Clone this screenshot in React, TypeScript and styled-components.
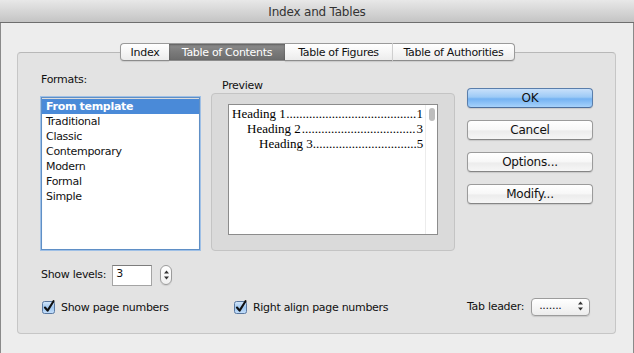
import styled, { createGlobalStyle } from 'styled-components';

const GlobalStyle = createGlobalStyle`
  html, body {
    margin: 0;
    padding: 0;
    background: #ededed;
  }
  * {
    box-sizing: border-box;
  }
`;

const FORMATS = [
  'From template',
  'Traditional',
  'Classic',
  'Contemporary',
  'Modern',
  'Formal',
  'Simple',
];

const TABS = [
  { label: 'Index', width: 49 },
  { label: 'Table of Contents', width: 116 },
  { label: 'Table of Figures', width: 107 },
  { label: 'Table of Authorities', width: 123 },
];

const HEADINGS = [
  { text: 'Heading 1', page: '1', indent: 0, dots: 40 },
  { text: 'Heading 2', page: '3', indent: 15, dots: 35 },
  { text: 'Heading 3', page: '5', indent: 27, dots: 32 },
];

const CheckIcon = () => (
  <svg width="14" height="14" viewBox="0 0 14 14">
    <defs>
      <linearGradient id="cbFill" x1="0" y1="0" x2="0" y2="1">
        <stop offset="0" stopColor="#d6e8fb" />
        <stop offset="0.5" stopColor="#9fc7f0" />
        <stop offset="1" stopColor="#c4defa" />
      </linearGradient>
    </defs>
    <rect
      x="0.5"
      y="1.5"
      width="12"
      height="12"
      rx="2"
      fill="url(#cbFill)"
      stroke="#5a78a0"
    />
    <path
      d="M3 7.5 L5.6 10.6 L11.5 1.2"
      fill="none"
      stroke="#111"
      strokeWidth="2.1"
      strokeLinecap="round"
      strokeLinejoin="round"
    />
  </svg>
);

const Arrows = ({ h }: { h: number }) => (
  <svg width="5" height={h} viewBox={`0 0 5 ${h}`}>
    <path d={`M0 ${h / 2 - 1.5} L2.5 ${h / 2 - 4.5} L5 ${h / 2 - 1.5} Z`} fill="#333" />
    <path d={`M0 ${h / 2 + 1.5} L2.5 ${h / 2 + 4.5} L5 ${h / 2 + 1.5} Z`} fill="#333" />
  </svg>
);

const App = () => {
  return (
    <Window>
      <GlobalStyle />
      <TitleBar>Index and Tables</TitleBar>
      <Body>
        <TabStrip>
          {TABS.map((t, i) => (
            <Tab
              key={t.label}
              $w={t.width}
              $active={i === 1}
              $first={i === 0}
              $last={i === TABS.length - 1}
              $sep={i === 3}
            >
              {t.label}
            </Tab>
          ))}
        </TabStrip>

        <GroupBox>
          <TopRow>
            <FormatsColumn>
              <Label>Formats:</Label>
              <ListBox>
                {FORMATS.map((f, i) => (
                  <ListItem key={f} $selected={i === 0}>
                    {f}
                  </ListItem>
                ))}
              </ListBox>
            </FormatsColumn>

            <PreviewColumn>
              <PreviewLabel>Preview</PreviewLabel>
              <Well>
                <PreviewBox>
                  <PreviewLines>
                    {HEADINGS.map((h) => (
                      <TocLine key={h.text} $indent={h.indent}>
                        <span>{h.text}</span>
                        <Leader>{'.'.repeat(h.dots)}</Leader>
                        <span>{h.page}</span>
                      </TocLine>
                    ))}
                  </PreviewLines>
                  <ScrollTrack>
                    <ScrollThumb />
                  </ScrollTrack>
                </PreviewBox>
              </Well>
            </PreviewColumn>

            <ButtonColumn>
              <PushButton $primary>OK</PushButton>
              <PushButton>Cancel</PushButton>
              <PushButton>Options...</PushButton>
              <PushButton>Modify...</PushButton>
            </ButtonColumn>
          </TopRow>

          <LevelsRow>
            <Label>Show levels:</Label>
            <NumberField>3</NumberField>
            <Stepper>
              <Arrows h={18} />
            </Stepper>
          </LevelsRow>

          <CheckRow>
            <CheckItem>
              <CheckIcon />
              <span>Show page numbers</span>
            </CheckItem>
            <CheckItem>
              <CheckIcon />
              <span>Right align page numbers</span>
            </CheckItem>
            <LeaderPicker>
              <Label>Tab leader:</Label>
              <PopUp>
                <span>.......</span>
                <Arrows h={16} />
              </PopUp>
            </LeaderPicker>
          </CheckRow>
        </GroupBox>
      </Body>
    </Window>
  );
};

const Window = styled.div`
  width: 634px;
  height: 353px;
  display: flex;
  flex-direction: column;
  background: #ededed;
  font-family: 'DejaVu Sans', 'Liberation Sans', sans-serif;
  font-size: 11px;
  letter-spacing: -0.3px;
  color: #111;
  overflow: hidden;
`;

const TitleBar = styled.div`
  height: 23px;
  flex: 0 0 23px;
  display: flex;
  align-items: center;
  justify-content: center;
  background: linear-gradient(#e8e8e8, #d6d6d6 50%, #c4c4c4);
  border-bottom: 1px solid #6e6e6e;
  font-size: 12px;
  letter-spacing: -0.2px;
  color: #333;
  padding-top: 1px;
`;

const Body = styled.div`
  flex: 1;
  padding: 20px 17px 0 16px;
  border-left: 1px solid #8a8a8a;
  border-right: 1px solid #8a8a8a;
`;

const TabStrip = styled.div`
  position: relative;
  z-index: 1;
  display: flex;
  justify-content: center;
  height: 18px;
  padding-left: 2px;
`;

const Tab = styled.div<{
  $w: number;
  $active?: boolean;
  $first?: boolean;
  $last?: boolean;
  $sep?: boolean;
}>`
  width: ${(p) => p.$w}px;
  height: 18px;
  display: flex;
  align-items: center;
  justify-content: center;
  border-top: 1px solid #9a9a9a;
  border-bottom: 1px solid #8c8c8c;
  border-left: ${(p) =>
    p.$first ? '1px solid #9a9a9a' : p.$sep ? '1px solid #cfcfcf' : 'none'};
  border-right: ${(p) => (p.$last ? '1px solid #9a9a9a' : 'none')};
  border-radius: ${(p) =>
    p.$first ? '4px 0 0 4px' : p.$last ? '0 4px 4px 0' : '0'};
  background: ${(p) =>
    p.$active
      ? 'linear-gradient(#8e8e8e, #7a7a7a 50%, #6c6c6c)'
      : 'linear-gradient(#ffffff, #f6f6f6 50%, #ececec)'};
  color: ${(p) => (p.$active ? '#fff' : '#111')};
  box-shadow: ${(p) =>
    p.$active ? 'inset 0 1px 2px rgba(0,0,0,0.35)' : '0 1px 1px rgba(0,0,0,0.1)'};
  white-space: nowrap;
`;

const GroupBox = styled.div`
  margin-top: -9px;
  height: 282px;
  background: #e3e3e3;
  border: 1px solid #c6c6c6;
  border-top-color: #b8b8b8;
  border-radius: 4px;
  padding: 0 22px 15px 23px;
  display: flex;
  flex-direction: column;
`;

const TopRow = styled.div`
  display: flex;
  align-items: flex-start;
`;

const Label = styled.div`
  line-height: 14px;
  white-space: nowrap;
`;

const FormatsColumn = styled.div`
  width: 159px;
  flex: 0 0 159px;
  padding-top: 20px;
  display: flex;
  flex-direction: column;
  gap: 10px;
`;

const ListBox = styled.div`
  height: 153px;
  background: #fff;
  border: 1px solid #5f8fc6;
  box-shadow: 0 0 0 1px #9fc0e6, inset 0 1px 1px rgba(0,0,0,0.15);
  padding-top: 1px;
`;

const ListItem = styled.div<{ $selected?: boolean }>`
  height: 15px;
  line-height: 15px;
  padding-left: 4px;
  background: ${(p) => (p.$selected ? '#4a8ad8' : 'transparent')};
  color: ${(p) => (p.$selected ? '#fff' : '#111')};
  font-weight: ${(p) => (p.$selected ? 'bold' : 'normal')};
`;

const PreviewColumn = styled.div`
  width: 244px;
  flex: 0 0 244px;
  margin-left: 11px;
  padding-top: 26px;
  display: flex;
  flex-direction: column;
  min-width: 0;
`;

const PreviewLabel = styled(Label)`
  padding-left: 11px;
`;

const Well = styled.div`
  height: 158px;
  background: #dadada;
  border: 1px solid #c4c4c4;
  border-radius: 4px;
  padding: 10px 16px 15px 16px;
  display: flex;
  min-width: 0;
`;

const PreviewBox = styled.div`
  flex: 1;
  min-width: 0;
  display: flex;
  background: #fff;
  border: 1px solid #8c8c8c;
`;

const PreviewLines = styled.div`
  flex: 1;
  min-width: 0;
  padding: 1px 2px 0 3px;
  font-family: 'Liberation Serif', 'DejaVu Serif', serif;
  font-size: 13px;
  letter-spacing: 0;
  color: #000;
`;

const TocLine = styled.div<{ $indent: number }>`
  display: flex;
  height: 15px;
  line-height: 15px;
  padding-left: ${(p) => p.$indent}px;
  white-space: nowrap;
`;

const Leader = styled.span`
  flex: 1;
  text-align: center;
  white-space: nowrap;
`;

const ScrollTrack = styled.div`
  width: 12px;
  flex: 0 0 12px;
  border-left: 1px solid #ececec;
  display: flex;
  justify-content: center;
  padding-top: 3px;
`;

const ScrollThumb = styled.div`
  width: 6px;
  height: 13px;
  border-radius: 3px;
  background: #bdbdbd;
`;

const ButtonColumn = styled.div`
  width: 126px;
  flex: 0 0 126px;
  margin-left: 12px;
  padding-top: 35px;
  display: flex;
  flex-direction: column;
  gap: 12px;
`;

const PushButton = styled.div<{ $primary?: boolean }>`
  height: 20px;
  display: flex;
  align-items: center;
  justify-content: center;
  font-size: 12px;
  letter-spacing: -0.2px;
  border-radius: 4px;
  border: 1px solid ${(p) => (p.$primary ? '#5a7eab' : '#9b9b9b')};
  border-bottom-color: ${(p) => (p.$primary ? '#4d6f9c' : '#858585')};
  background: ${(p) =>
    p.$primary
      ? 'linear-gradient(#c8e0fa, #9ccaf6 45%, #74b2f2 55%, #a6d2fb)'
      : 'linear-gradient(#ffffff, #f7f7f7 50%, #ececec 55%, #f6f6f6)'};
  box-shadow: 0 1px 1px rgba(0, 0, 0, 0.12);
  color: #111;
`;

const LevelsRow = styled.div`
  margin-top: 14px;
  height: 20px;
  display: flex;
  align-items: center;
`;

const NumberField = styled.div`
  width: 40px;
  height: 21px;
  margin-left: 6px;
  background: #fff;
  border: 1px solid #a4a4a4;
  border-top-color: #7c7c7c;
  padding: 1px 3px;
  line-height: 14px;
  font-size: 11px;
`;

const Stepper = styled.div`
  width: 12px;
  height: 20px;
  margin-left: 8px;
  border: 1px solid #9c9c9c;
  border-radius: 6px;
  background: linear-gradient(#fff, #f0f0f0);
  box-shadow: 0 1px 1px rgba(0, 0, 0, 0.1);
  display: flex;
  align-items: center;
  justify-content: center;
`;

const CheckRow = styled.div`
  margin-top: 12px;
  height: 20px;
  display: grid;
  grid-template-columns: 192px 234px auto;
  align-items: center;
`;

const CheckItem = styled.div`
  display: flex;
  align-items: center;
  gap: 5px;
  padding-left: 1px;
  white-space: nowrap;
`;

const LeaderPicker = styled.div`
  display: flex;
  align-items: center;
  gap: 7px;
`;

const PopUp = styled.div`
  width: 59px;
  height: 18px;
  border: 1px solid #9c9c9c;
  border-radius: 4px;
  background: linear-gradient(#ffffff, #f6f6f6 50%, #ececec);
  box-shadow: 0 1px 1px rgba(0, 0, 0, 0.12);
  display: flex;
  align-items: center;
  justify-content: space-between;
  padding: 0 6px 2px 7px;
  line-height: 14px;
`;

export default App;
